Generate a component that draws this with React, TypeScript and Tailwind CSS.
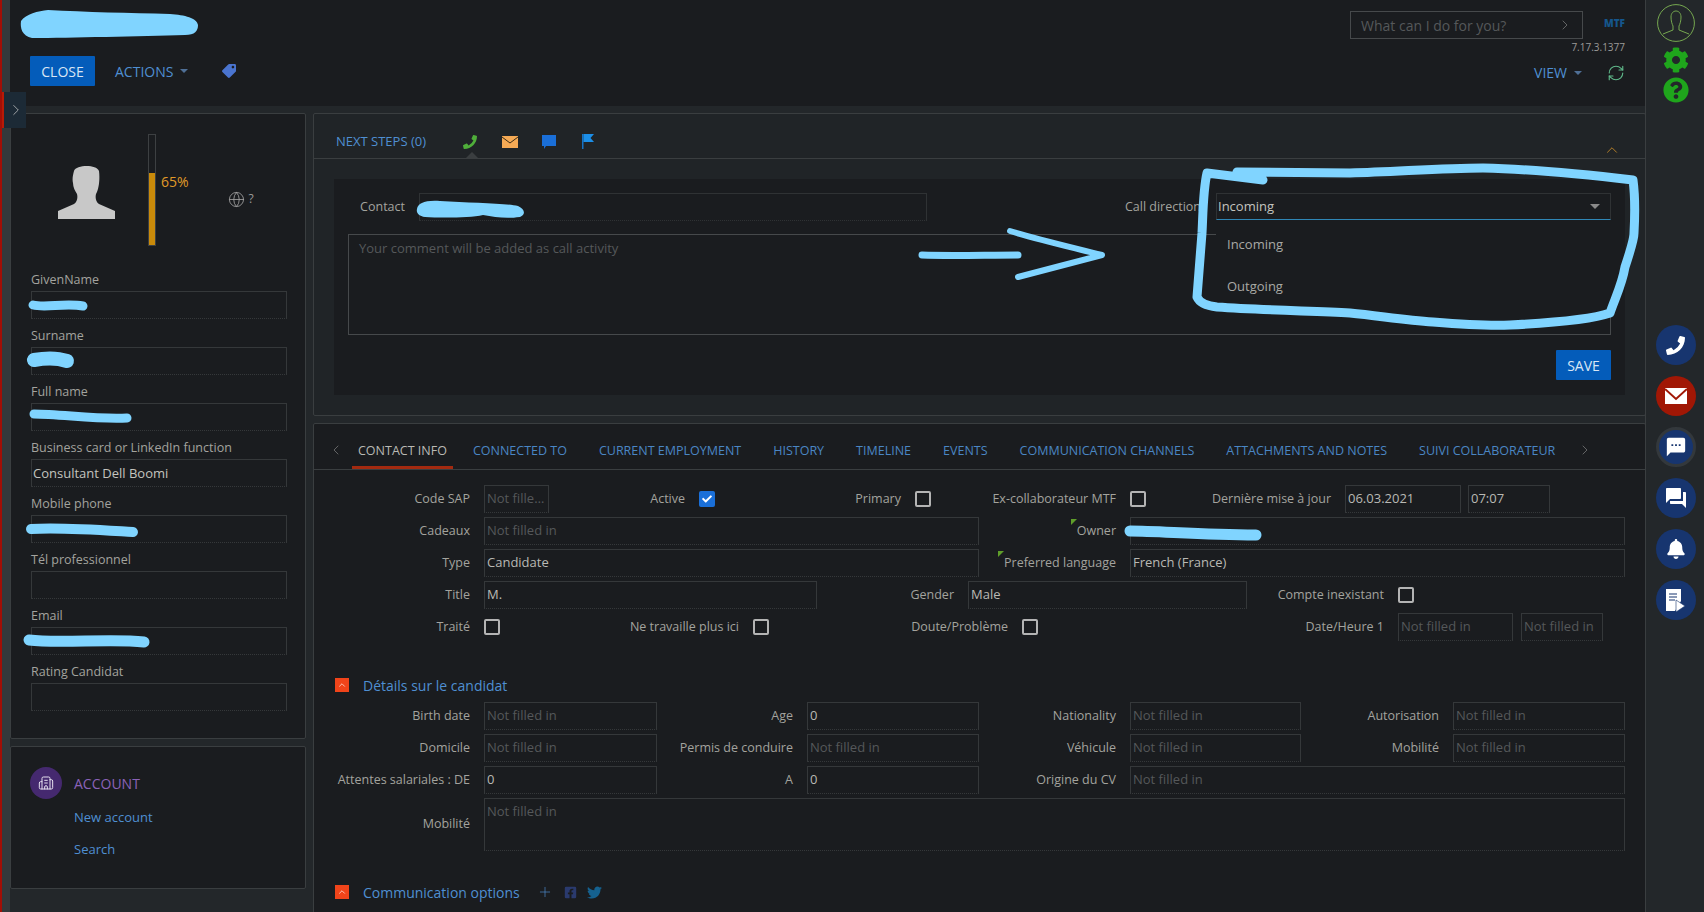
import React from "react";
import { ChevronLeft, ChevronRight, ChevronUp, Plus, RefreshCw, Building2, Globe } from "lucide-react";
import { FaCog, FaQuestionCircle, FaPhoneAlt, FaBell, FaTag, FaTwitter, FaFacebookSquare, FaCheck } from "react-icons/fa";
import { MdSms, MdQuestionAnswer } from "react-icons/md";

const inputCls =
  "h-[28px] shrink-0 border border-[#35383a] [border-bottom-style:dotted] pl-[2px] text-[13px] leading-[24px] truncate";

const Field = ({ w, value }: { w: string; value?: string }) => (
  <div className={`${inputCls} ${w} ${value ? "text-[#b9b9b4]" : "text-[#55585a]"}`}>
    {value ?? "Not filled in"}
  </div>
);

const Label = ({ w, text, flag }: { w: string; text: string; flag?: boolean }) => (
  <div className={`${w} shrink-0 pr-[14px] text-right text-[12.5px] text-[#a3a39e] whitespace-nowrap`}>
    <span className="relative">
      {flag && (
        <span className="absolute left-[-6px] top-[-3px] h-0 w-0 border-t-[6px] border-r-[6px] border-t-[#5f9e2a] border-r-transparent" />
      )}
      {text}
    </span>
  </div>
);

const Check = ({ on }: { on?: boolean }) =>
  on ? (
    <div className="flex h-[16px] w-[16px] shrink-0 items-center justify-center rounded-[2px] bg-[#1a6fd8]">
      <FaCheck className="text-white" size={10} />
    </div>
  ) : (
    <div className="h-[16px] w-[16px] shrink-0 rounded-[2px] border-2 border-[#b4b4b4]" />
  );

const Row = ({ children }: { children: React.ReactNode }) => (
  <div className="flex h-[28px] items-center">{children}</div>
);

const SideField = ({ label, value }: { label: string; value?: string }) => (
  <div className="mb-[9px]">
    <div className="h-[16px] text-[12.5px] leading-[16px] text-[#a3a39e]">{label}</div>
    <div
      className={`mt-[3px] h-[28px] w-[256px] border border-[#35383a] [border-bottom-style:dotted] pl-[1px] leading-[26px] ${
        value === undefined ? "text-[13px] text-[#55585a]" : "text-[13px] text-[#c4c4bf]"
      }`}
    >
      {value}
    </div>
  </div>
);

const SectionTitle = ({ text }: { text: string }) => (
  <div className="flex h-[16px] items-center">
    <div className="ml-[21px] flex h-[14px] w-[14px] items-center justify-center bg-[#f0441a]">
      <ChevronUp size={10} strokeWidth={2} className="text-[#ffd9cc]" />
    </div>
    <span className="ml-[14px] text-[14px] text-[#4f8fd2]">{text}</span>
  </div>
);

const Round = ({ children, bg = "bg-[#17356f]", ring }: { children: React.ReactNode; bg?: string; ring?: boolean }) => (
  <div
    className={`flex h-[40px] w-[40px] items-center justify-center rounded-full ${bg} ${
      ring ? "border-[3px] border-[#33383c]" : ""
    }`}
  >
    {children}
  </div>
);

const tabs = [
  "CONNECTED TO",
  "CURRENT EMPLOYMENT",
  "HISTORY",
  "TIMELINE",
  "EVENTS",
  "COMMUNICATION CHANNELS",
  "ATTACHMENTS AND NOTES",
  "SUIVI COLLABORATEUR",
];

export default function App() {
  return (
    <div className="relative flex h-[912px] w-[1704px] overflow-hidden bg-[#23272a] font-['Open_Sans',sans-serif]">
      <div className="h-full w-[2px] shrink-0 bg-[#a10f06]" />
      <div className="h-full w-[8px] shrink-0 bg-[#33393b]" />

      <div className="flex w-[1635px] shrink-0 flex-col">
        {/* header */}
        <div className="flex h-[106px] shrink-0 justify-between bg-[#1a1c1f]">
          <div className="pl-[20px] pt-[56px]">
            <div className="flex items-center">
              <div className="flex h-[30px] w-[65px] items-center justify-center rounded-[1px] bg-[#045cba] text-[14px] text-[#d9e6f5]">
                CLOSE
              </div>
              <span className="ml-[20px] text-[14px] text-[#4f8fd2]">ACTIONS</span>
              <span className="ml-[7px] h-0 w-0 border-x-[4px] border-t-[4px] border-x-transparent border-t-[#4f6f96]" />
              <FaTag className="ml-[34px] scale-x-[-1] text-[#4a74cf]" size={14} />
            </div>
          </div>
          <div className="flex w-[330px] flex-col items-end pr-[20px] pt-[11px]">
            <div className="flex items-start">
              <div className="flex h-[28px] w-[233px] items-center justify-between border border-[#46494b] pl-[10px] pr-[9px] text-[14px] text-[#55585a]">
                What can I do for you?
                <ChevronRight size={16} strokeWidth={1} className="text-[#8a8a8a]" />
              </div>
              <span className="ml-[21px] mt-[5px] text-[10px] font-extrabold leading-[14px] text-[#15568c]">MTF</span>
            </div>
            <div className="mt-[1px] text-[10px] leading-[14px] text-[#9a9a98]">7.17.3.1377</div>
            <div className="mt-[8px] flex items-center">
              <span className="text-[14px] text-[#4f8fd2]">VIEW</span>
              <span className="ml-[7px] h-0 w-0 border-x-[4px] border-t-[4px] border-x-transparent border-t-[#4f6f96]" />
              <RefreshCw size={18} strokeWidth={1.5} className="ml-[25px] text-[#5fb88a]" />
            </div>
          </div>
        </div>

        {/* body */}
        <div className="flex gap-[7px] pt-[7px]">
          {/* left column */}
          <div className="flex w-[296px] shrink-0 flex-col gap-[7px]">
            <div className="h-[626px] rounded-[2px] border border-[#3a3e40] bg-[#1a1c1f]">
              <div className="flex h-[158px] pl-[47px]">
                <svg width="57" height="54" viewBox="0 0 57 54" className="mt-[51px]">
                  <path
                    d="M16 6 C18 0 38 -1 41 6 C42 14 41 24 38 29 C37 33 38 37 41 39 L57 46 L57 54 L0 54 L0 46 L16 39 C19 37 20 33 19 29 C17 26 15 22 15 18 C14 14 15 10 16 6 Z"
                    fill="#c8c8c8"
                  />
                </svg>
                <div className="ml-[33px] mt-[20px] flex h-[112px] w-[8px] flex-col justify-end border border-[#3d4042]">
                  <div className="h-[72px] bg-[#c98a0a]" />
                </div>
                <span className="ml-[5px] mt-[57px] h-[20px] text-[14px] text-[#e09a28]">65%</span>
                <div className="ml-[39px] mt-[76px] flex h-[18px] items-center">
                  <Globe size={17} strokeWidth={1.2} className="text-[#a0a0a0]" />
                  <span className="ml-[4px] text-[12px] text-[#9a9a98]">?</span>
                </div>
              </div>
              <div className="pl-[20px]">
                <SideField label="GivenName" value="" />
                <SideField label="Surname" value="" />
                <SideField label="Full name" value="" />
                <SideField label="Business card or LinkedIn function" value="Consultant Dell Boomi" />
                <SideField label="Mobile phone" value="" />
                <SideField label="Tél professionnel" />
                <SideField label="Email" value="" />
                <SideField label="Rating Candidat" />
              </div>
            </div>
            <div className="h-[143px] rounded-[2px] border border-[#3a3e40] bg-[#1a1c1f] pl-[19px] pt-[20px]">
              <div className="flex items-center">
                <div className="flex h-[32px] w-[32px] items-center justify-center rounded-full bg-[#45296f]">
                  <Building2 size={16} strokeWidth={1.5} className="text-[#e6e0f0]" />
                </div>
                <span className="ml-[12px] text-[14px] text-[#8a62b8]">ACCOUNT</span>
              </div>
              <div className="ml-[44px] mt-[9px] text-[13px] leading-[18px] text-[#4f8fd2]">New account</div>
              <div className="ml-[44px] mt-[14px] text-[13px] leading-[18px] text-[#4f8fd2]">Search</div>
            </div>
          </div>

          {/* right column */}
          <div className="flex w-[1333px] shrink-0 flex-col gap-[7px]">
            {/* next steps */}
            <div className="h-[303px] rounded-[2px] border border-[#3a3e40] bg-[#202427]">
              <div className="relative flex h-[45px] items-center border-b border-[#3a3e40] pl-[22px] pt-[11px]">
                <span className="text-[13px] text-[#4f8fd2]">NEXT STEPS (0)</span>
                <FaPhoneAlt size={14} className="ml-[37px] scale-x-[-1] text-[#4fae3a]" />
                <svg width="16" height="12" viewBox="0 0 16 12" className="ml-[25px]">
                  <path d="M0 0H16V12H0Z" fill="#f5aa55" />
                  <path d="M0 1L8 7L16 1" fill="none" stroke="#3a2b14" strokeWidth="1" />
                </svg>
                <svg width="14" height="14" viewBox="0 0 14 14" className="ml-[24px]">
                  <path d="M0 0H14V11H4L2 14V11H0Z" fill="#1a6fd8" />
                </svg>
                <svg width="12" height="15" viewBox="0 0 12 15" className="ml-[26px]">
                  <path d="M0 0H1.5V15H0Z" fill="#1673c4" />
                  <path d="M1.5 0H12L8.5 4L12 8H1.5Z" fill="#1c8fe8" />
                </svg>
                <span className="absolute bottom-0 left-[152px] h-0 w-0 border-x-[6px] border-b-[6px] border-x-transparent border-b-[#3a3e40]" />
                <ChevronUp size={18} strokeWidth={1} className="absolute left-[1289px] top-[27px] text-[#e09a28]" />
              </div>
              <div className="relative ml-[20px] mt-[20px] h-[216px] w-[1291px] bg-[#1a1c1f] pt-[14px]">
                <div className="flex">
                  <div className="w-[85px] shrink-0 pr-[14px] text-right text-[12.5px] leading-[28px] text-[#a3a39e]">Contact</div>
                  <div className="h-[28px] w-[508px] border border-[#2f3234] [border-bottom-style:dotted]" />
                  <div className="w-[289px] shrink-0 pr-[15px] text-right text-[12.5px] leading-[28px] text-[#a3a39e]">Call direction</div>
                  <div className="flex h-[27px] w-[395px] items-center justify-between border border-[#2f3234] border-b-[#2f86b5] pl-[1px] pr-[10px] text-[13px] text-[#c4c4bf]">
                    Incoming
                    <span className="h-0 w-0 border-x-[5px] border-t-[5px] border-x-transparent border-t-[#8a8a8a]" />
                  </div>
                </div>
                <div className="ml-[14px] mt-[13px] h-[101px] w-[1263px] border border-[#46494b] pl-[10px] pt-[4px] text-[13px] text-[#55585a]">
                  Your comment will be added as call activity
                </div>
                <div className="ml-[1222px] mt-[15px] flex h-[30px] w-[55px] items-center justify-center rounded-[1px] bg-[#045cba] text-[14px] text-[#d9e6f5]">
                  SAVE
                </div>
                {/* open select list */}
                <div className="absolute left-[882px] top-[41px] h-[85px] w-[395px] bg-[#1a1c1f] pl-[11px] text-[13px] text-[#a9a9a5]">
                  <div className="mt-[14px] leading-[20px]">Incoming</div>
                  <div className="mt-[22px] leading-[20px]">Outgoing</div>
                </div>
              </div>
            </div>

            {/* contact details */}
            <div className="h-[500px] rounded-[2px] border border-[#3a3e40] bg-[#1a1c1f]">
              <div className="flex h-[46px] items-end border-b border-[#3a3e40]">
                <ChevronLeft size={16} strokeWidth={1} className="mb-[11px] ml-[14px] text-[#8a8a8a]" />
                <div className="ml-[8px] h-[46px] border-b-[3px] border-[#a32a10] px-[6px] pt-[18px] text-[12.5px] leading-[20px] text-[#b9b9b4]">
                  CONTACT INFO
                </div>
                <div className="ml-[20px] flex gap-[32px]">
                  {tabs.map((tab) => (
                    <div key={tab} className="h-[46px] pt-[18px] text-[12.5px] leading-[20px] whitespace-nowrap text-[#4a86c4]">
                      {tab}
                    </div>
                  ))}
                </div>
                <ChevronRight size={16} strokeWidth={1} className="mb-[11px] ml-[22px] text-[#8a8a8a]" />
              </div>

              <div className="flex flex-col gap-[4px] pt-[15px]">
                <Row>
                  <Label w="w-[170px]" text="Code SAP" />
                  <Field w="w-[65px]" value={undefined} />
                  <Label w="w-[150px]" text="Active" />
                  <Check on />
                  <Label w="w-[200px]" text="Primary" />
                  <Check />
                  <Label w="w-[199px]" text="Ex-collaborateur MTF" />
                  <Check />
                  <Label w="w-[199px]" text="Dernière mise à jour" />
                  <Field w="w-[116px]" value="06.03.2021" />
                  <div className="w-[7px]" />
                  <Field w="w-[82px]" value="07:07" />
                </Row>
                <Row>
                  <Label w="w-[170px]" text="Cadeaux" />
                  <Field w="w-[495px]" />
                  <Label w="w-[151px]" text="Owner" flag />
                  <Field w="w-[495px]" value="" />
                </Row>
                <Row>
                  <Label w="w-[170px]" text="Type" />
                  <Field w="w-[495px]" value="Candidate" />
                  <Label w="w-[151px]" text="Preferred language" flag />
                  <Field w="w-[495px]" value="French (France)" />
                </Row>
                <Row>
                  <Label w="w-[170px]" text="Title" />
                  <Field w="w-[333px]" value="M." />
                  <Label w="w-[151px]" text="Gender" />
                  <Field w="w-[279px]" value="Male" />
                  <Label w="w-[151px]" text="Compte inexistant" />
                  <Check />
                </Row>
                <Row>
                  <Label w="w-[170px]" text="Traité" />
                  <Check />
                  <Label w="w-[253px]" text="Ne travaille plus ici" />
                  <Check />
                  <Label w="w-[253px]" text="Doute/Problème" />
                  <Check />
                  <Label w="w-[360px]" text="Date/Heure 1" />
                  <Field w="w-[115px]" />
                  <div className="w-[8px]" />
                  <Field w="w-[82px]" />
                </Row>
              </div>

              <div className="mt-[36px]">
                <SectionTitle text="Détails sur le candidat" />
              </div>
              <div className="mt-[9px] flex flex-col gap-[4px]">
                <Row>
                  <Label w="w-[170px]" text="Birth date" />
                  <Field w="w-[173px]" />
                  <Label w="w-[150px]" text="Age" />
                  <Field w="w-[172px]" value="0" />
                  <Label w="w-[151px]" text="Nationality" />
                  <Field w="w-[171px]" />
                  <Label w="w-[152px]" text="Autorisation" />
                  <Field w="w-[172px]" />
                </Row>
                <Row>
                  <Label w="w-[170px]" text="Domicile" />
                  <Field w="w-[173px]" />
                  <Label w="w-[150px]" text="Permis de conduire" />
                  <Field w="w-[172px]" />
                  <Label w="w-[151px]" text="Véhicule" />
                  <Field w="w-[171px]" />
                  <Label w="w-[152px]" text="Mobilité" />
                  <Field w="w-[172px]" />
                </Row>
                <Row>
                  <Label w="w-[170px]" text="Attentes salariales : DE" />
                  <Field w="w-[173px]" value="0" />
                  <Label w="w-[150px]" text="A" />
                  <Field w="w-[172px]" value="0" />
                  <Label w="w-[151px]" text="Origine du CV" />
                  <Field w="w-[495px]" />
                </Row>
                <div className="flex h-[53px] items-center">
                  <Label w="w-[170px]" text="Mobilité" />
                  <div className="h-[53px] w-[1141px] border border-[#35383a] [border-bottom-style:dotted] pl-[2px] text-[13px] leading-[24px] text-[#55585a]">
                    Not filled in
                  </div>
                </div>
              </div>

              <div className="mt-[33px] flex items-center">
                <SectionTitle text="Communication options" />
                <Plus size={16} strokeWidth={1} className="ml-[17px] text-[#4f8fd2]" />
                <FaFacebookSquare size={13} className="ml-[11px] text-[#2a3a6e]" />
                <FaTwitter size={15} className="ml-[10px] text-[#15618f]" />
              </div>
            </div>
          </div>
        </div>
      </div>

      {/* right rail */}
      <div className="flex w-[59px] shrink-0 flex-col items-center border-l border-[#3a3e40] pl-[1px]">
        <svg width="38" height="38" viewBox="0 0 38 38" className="mt-[4px]">
          <circle cx="19" cy="19" r="18.4" fill="none" stroke="#76a850" strokeWidth="1" />
          <path
            d="M14 13 C14 5 24 5 24 13 C24 17 23 20 22 22 L22 26 L32 30 M16 22 C15 20 14 17 14 13 M16 22 L16 26 L6 30"
            fill="none"
            stroke="#76a850"
            strokeWidth="1"
          />
        </svg>
        <FaCog size={26} className="mt-[5px] text-[#1fa51c]" />
        <FaQuestionCircle size={26} className="mt-[4px] text-[#1fa51c]" />
        <div className="mt-[222px] flex flex-col items-center gap-[11px]">
          <Round>
            <FaPhoneAlt size={19} className="scale-x-[-1] text-white" />
          </Round>
          <Round bg="bg-[#a11705]">
            <svg width="22" height="16" viewBox="0 0 22 16">
              <path d="M0 0H22V16H0Z" fill="#fff" />
              <path d="M0 1L11 11L22 1" fill="none" stroke="#a11705" strokeWidth="2" />
            </svg>
          </Round>
          <Round ring>
            <MdSms size={22} className="text-white" />
          </Round>
          <Round>
            <MdQuestionAnswer size={24} className="text-white" />
          </Round>
          <Round>
            <FaBell size={20} className="text-white" />
          </Round>
          <Round>
            <svg width="20" height="23" viewBox="0 0 20 23">
              <path d="M0 0H15V12L9 22H0Z" fill="#fff" />
              <path d="M3 5H11M3 8H11M3 11H9" stroke="#17356f" strokeWidth="1.2" />
              <path d="M10 11L19 17L10 23Z" fill="#fff" stroke="#17356f" strokeWidth="0.6" />
            </svg>
          </Round>
        </div>
      </div>

      {/* sidebar expander */}
      <div className="absolute left-[2px] top-[92px] flex h-[36px] w-[24px] items-center border-l-2 border-[#b81a06] bg-[#1c2a36]">
        <ChevronRight size={18} strokeWidth={1} className="ml-[3px] text-[#c8c8c8]" />
      </div>

      {/* marker scribbles drawn over the screenshot */}
      <svg width="1704" height="912" viewBox="0 0 1704 912" className="pointer-events-none absolute left-0 top-0">
        <path
          d="M21 21 C26 14 38 11 48 10 C85 12 130 13 170 14 C185 15 197 18 198 25 C198 31 195 35 185 35 C140 36 70 38 32 38 C22 36 20 28 21 21 Z"
          fill="#80d4ff"
        />
        <path
          d="M417 209 C418 203 425 200 440 201 C470 203 505 203 518 206 C525 209 526 215 520 217 C505 219 495 217 483 215 C470 218 440 218 425 217 C419 216 416 213 417 209 Z"
          fill="#80d4ff"
        />
        <g fill="none" stroke="#80d4ff" strokeLinecap="round" strokeLinejoin="round">
          <path
            d="M1263 180 L1207 173 C1203 190 1203 215 1202 233 L1197 297 C1200 304 1208 306 1217 307 C1260 310 1310 311 1350 313 C1380 316 1405 320 1433 322 C1470 325 1490 326 1510 325 C1550 323 1590 320 1610 313 C1615 298 1622 285 1625 267 C1630 252 1634 240 1634 233 C1635 215 1635 195 1633 180 C1590 175 1530 169 1483 168 C1440 168 1395 172 1350 173 C1310 173 1270 172 1237 172"
            strokeWidth="9"
          />
          <path d="M922 255 C950 256 985 255 1018 255" strokeWidth="7" />
          <path d="M1010 231 C1040 240 1075 248 1102 255 C1075 262 1045 270 1018 277" strokeWidth="6" />
          <path d="M33 305 C45 308 65 303 83 306" strokeWidth="9" />
          <path d="M34 360 C45 358 58 358 67 361" strokeWidth="14" />
          <path d="M34 414 C60 414 100 420 127 418" strokeWidth="9" />
          <path d="M31 529 C60 527 100 530 133 532" strokeWidth="10" />
          <path d="M29 640 C60 644 110 638 144 642" strokeWidth="11" />
          <path d="M1130 531 C1160 531 1200 535 1256 535" strokeWidth="11" />
        </g>
      </svg>
    </div>
  );
}
